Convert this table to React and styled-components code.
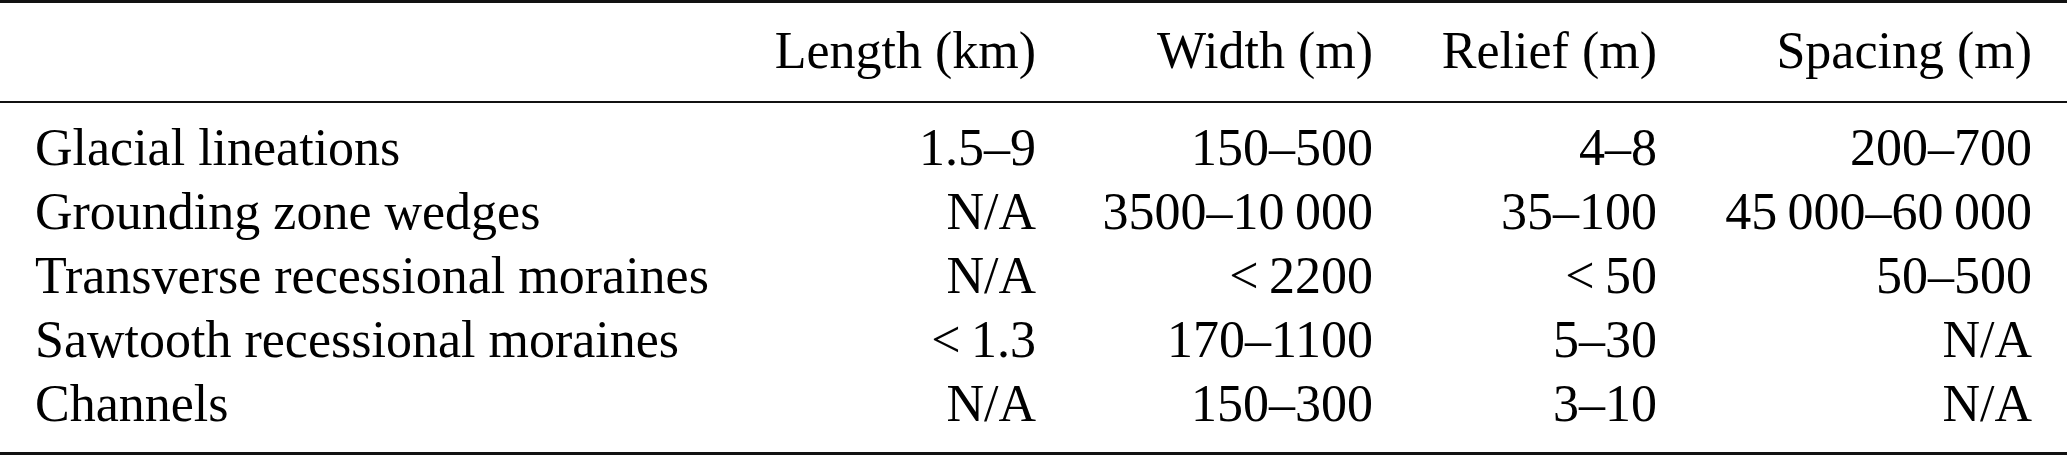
import React from "react";
import styled, { createGlobalStyle } from "styled-components";

const GlobalStyle = createGlobalStyle`
  html, body {
    margin: 0;
    padding: 0;
    background: #fff;
  }
`;

const StyledTable = styled.table`
  width: 100%;
  table-layout: fixed;
  border-collapse: separate;
  border-spacing: 0;
  font-family: "Liberation Serif", "Times New Roman", serif;
  font-size: 52px;
  line-height: 64px;
  color: #000;

  th,
  td {
    box-sizing: border-box;
  }
`;

const StyledHeadCell = styled.th`
  width: ${({ $w }) => $w}px;
  font-weight: normal;
  text-align: ${({ $left }) => ($left ? "left" : "right")};
  white-space: nowrap;
  padding: 16px 0 18px;
  border-top: 3px solid #111;
  border-bottom: 2px solid #111;

  &:first-child {
    padding-left: 35px;
  }

  &:last-child {
    padding-right: 35px;
  }
`;

const StyledRow = styled.tr`
  &:first-child td {
    padding-top: 13px;
  }

  &:last-child td {
    padding-bottom: 16px;
    border-bottom: 3px solid #111;
  }
`;

const StyledCell = styled.td`
  padding: 0;
  white-space: nowrap;
  text-align: ${({ $left }) => ($left ? "left" : "right")};

  &:first-child {
    padding-left: 35px;
  }

  &:last-child {
    padding-right: 35px;
  }
`;

const columns = [
  { label: "", width: 736 },
  { label: "Length (km)", width: 300 },
  { label: "Width (m)", width: 337 },
  { label: "Relief (m)", width: 284 },
  { label: "Spacing (m)", width: 410 },
];

const rows = [
  ["Glacial lineations", "1.5–9", "150–500", "4–8", "200–700"],
  [
    "Grounding zone wedges",
    "N/A",
    "3500–10\u2009000",
    "35–100",
    "45\u2009000–60\u2009000",
  ],
  ["Transverse recessional moraines", "N/A", "<\u20092200", "<\u200950", "50–500"],
  ["Sawtooth recessional moraines", "<\u20091.3", "170–1100", "5–30", "N/A"],
  ["Channels", "N/A", "150–300", "3–10", "N/A"],
];

const App = () => {
  return (
    <>
      <GlobalStyle />
      <StyledTable>
        <thead>
          <tr>
            {columns.map((col, i) => (
              <StyledHeadCell key={i} $w={col.width} $left={i === 0}>
                {col.label}
              </StyledHeadCell>
            ))}
          </tr>
        </thead>
        <tbody>
          {rows.map((row) => (
            <StyledRow key={row[0]}>
              {row.map((value, i) => (
                <StyledCell key={i} $left={i === 0}>
                  {value}
                </StyledCell>
              ))}
            </StyledRow>
          ))}
        </tbody>
      </StyledTable>
    </>
  );
};

export default App;
